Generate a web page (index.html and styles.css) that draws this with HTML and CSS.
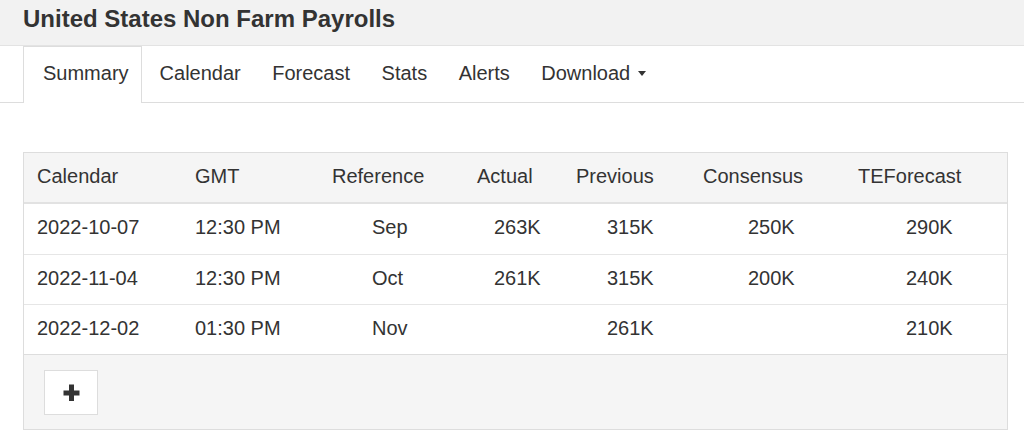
FILE: index.html
```html
<!DOCTYPE html>
<html lang="en">
<head>
<meta charset="utf-8">
<title>United States Non Farm Payrolls</title>
<link rel="stylesheet" href="styles.css">
</head>
<body>
<header class="page-head">
  <h1 class="title">United States Non Farm Payrolls</h1>
</header>
<nav class="tabs">
  <a class="tab active">Summary</a>
  <a class="tab">Calendar</a>
  <a class="tab">Forecast</a>
  <a class="tab">Stats</a>
  <a class="tab">Alerts</a>
  <a class="tab">Download <span class="caret"></span></a>
</nav>
<main class="content">
  <section class="panel">
    <div class="grid head">
      <div class="c c1">Calendar</div>
      <div class="c c2">GMT</div>
      <div class="c c3">Reference</div>
      <div class="c c4">Actual</div>
      <div class="c c5">Previous</div>
      <div class="c c6">Consensus</div>
      <div class="c c7">TEForecast</div>
    </div>
    <div class="grid row">
      <div class="c c1">2022-10-07</div>
      <div class="c c2">12:30 PM</div>
      <div class="c c3 v3">Sep</div>
      <div class="c c4 v4">263K</div>
      <div class="c c5 v5">315K</div>
      <div class="c c6 v6">250K</div>
      <div class="c c7 v7">290K</div>
    </div>
    <div class="grid row">
      <div class="c c1">2022-11-04</div>
      <div class="c c2">12:30 PM</div>
      <div class="c c3 v3">Oct</div>
      <div class="c c4 v4">261K</div>
      <div class="c c5 v5">315K</div>
      <div class="c c6 v6">200K</div>
      <div class="c c7 v7">240K</div>
    </div>
    <div class="grid row">
      <div class="c c1">2022-12-02</div>
      <div class="c c2">01:30 PM</div>
      <div class="c c3 v3">Nov</div>
      <div class="c c4 v4"></div>
      <div class="c c5 v5">261K</div>
      <div class="c c6 v6"></div>
      <div class="c c7 v7">210K</div>
    </div>
    <div class="foot">
      <button class="more" type="button" aria-label="More">
        <svg width="17" height="17" viewBox="0 0 17 17"><path d="M6 0.5h5v6h5.5v5H11v5.5H6v-5.5H0.5v-5H6z" fill="#333"/></svg>
      </button>
    </div>
  </section>
</main>
</body>
</html>
```
FILE: styles.css
```css
* { box-sizing: border-box; }
html, body { margin: 0; padding: 0; background: #fff; }
body {
  font-family: "Liberation Sans", Arial, sans-serif;
  color: #333;
  font-size: 20px;
}
.page-head {
  background: #f2f2f2;
  height: 46px;
  border-bottom: 1px solid #e3e3e3;
  padding: 0 23px;
  display: flex;
  align-items: center;
}
.title {
  margin: 0;
  font-size: 24px;
  font-weight: bold;
  line-height: 1;
  margin-top: -7px;
  color: #333;
}
.tabs {
  display: flex;
  height: 57px;
  padding-left: 23px;
  border-bottom: 1px solid #ddd;
}
.tab {
  display: flex;
  align-items: center;
  padding: 0 14.5px 4px 15px;
  border: 1px solid transparent;
  border-bottom: none;
  margin-bottom: -1px;
  color: #333;
  line-height: 1;
}
.tab.active {
  padding: 0 12px 4px 19px;
  margin-right: 2px;
  border-color: #ddd;
  background: #fff;
}
.caret {
  display: inline-block;
  width: 0;
  height: 0;
  margin-left: 8px;
  border-left: 4px solid transparent;
  border-right: 4px solid transparent;
  border-top: 5px solid #333;
}
.content {
  padding: 49px 16px 0 23px;
}
.panel {
  border: 1px solid #ddd;
}
.grid {
  display: grid;
  grid-template-columns: 158px 137px 145px 99px 127px 155px 162px;
}
.head {
  background: #f5f5f5;
  height: 51px;
  border-bottom: 2px solid #e2e2e2;
}
.head .c { padding-bottom: 2px; }
.row {
  height: 50px;
  border-top: 1px solid #e6e6e6;
}
.head + .row { border-top: none; height: 50px; }
.c {
  display: flex;
  align-items: center;
  padding-left: 13px;
  white-space: nowrap;
}
.row .c { padding-bottom: 3px; }
.v3 { padding-left: 53px; }
.v4 { padding-left: 30px; }
.v5 { padding-left: 44px; }
.v6 { padding-left: 58px; }
.v7 { padding-left: 61px; }
.foot {
  background: #f5f5f5;
  border-top: 1px solid #ddd;
  padding: 15px 20px 14px;
}
.more {
  display: flex;
  align-items: center;
  justify-content: center;
  width: 54px;
  height: 45px;
  background: #fff;
  border: 1px solid #ddd;
  padding: 0;
  margin: 0;
}
.more svg { display: block; }
```
